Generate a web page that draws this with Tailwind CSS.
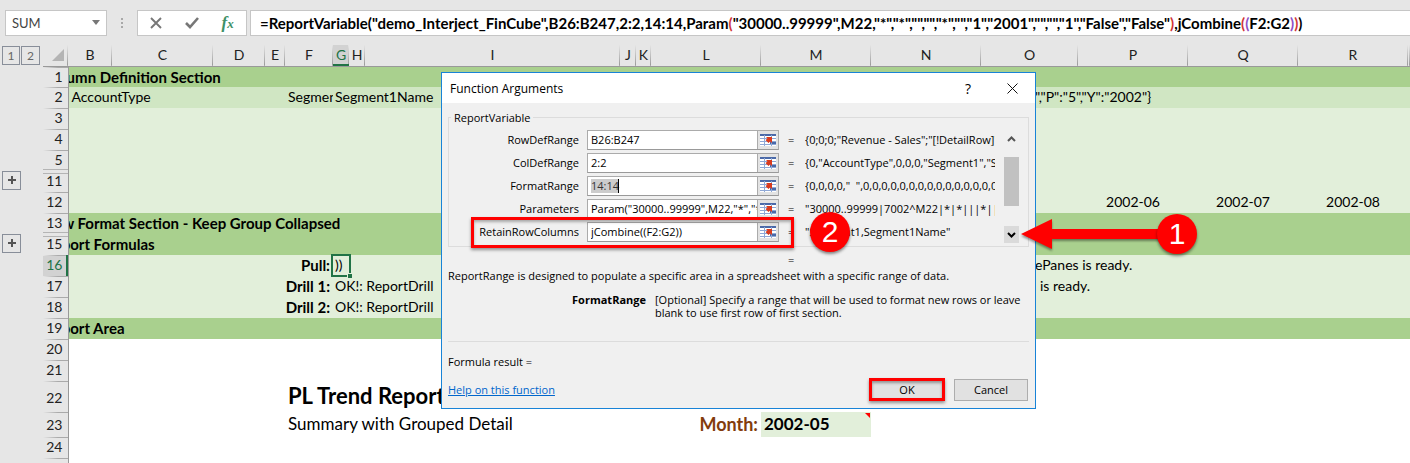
<!DOCTYPE html>
<html lang="en">
<head>
<meta charset="utf-8">
<title>Function Arguments</title>
<script src="https://cdn.jsdelivr.net/npm/@tailwindcss/browser@4"></script>
</head>
<body class="relative flex h-screen flex-col overflow-hidden bg-[#e6e6e6] font-['Lato',sans-serif] text-sm leading-[18px] text-black">

<!-- Formula bar -->
<div class="flex shrink-0 items-stretch pt-[10px] pb-[9px] pl-[5px]">
  <div class="relative flex h-[26px] w-[102px] border border-[#c6c6c6] bg-white">
    <input aria-label="Name box" value="SUM" class="w-full bg-transparent pl-[6px] text-[13px] text-[#444] outline-none">
    <svg class="absolute top-[9px] right-[6px] h-[5px] w-[8px]" viewBox="0 0 8 5"><path d="M0 0h8L4 5z" fill="#777"/></svg>
  </div>
  <svg class="mx-[14px] h-[26px] w-[2px]" viewBox="0 0 2 26"><path d="M0 8h2v2H0zM0 12h2v2H0zM0 16h2v2H0z" fill="#a8a8a8"/></svg>
  <div class="flex w-[110px] items-center justify-around border border-[#c6c6c6] bg-white px-[1px]">
    <button aria-label="Cancel entry"><svg class="h-[12px] w-[12px]" viewBox="0 0 12 12"><path d="M1 1l10 10M11 1L1 11" stroke="#777" stroke-width="1.9" fill="none"/></svg></button>
    <button aria-label="Enter"><svg class="h-[12px] w-[14px]" viewBox="0 0 14 12"><path d="M1 6l4 4 8-9" stroke="#777" stroke-width="2.6" fill="none"/></svg></button>
    <button aria-label="Insert function" class="font-['Liberation_Serif',serif] text-[17px] font-bold text-[#3f9168] italic">f<span class="text-[13px]">x</span></button>
  </div>
  <div class="ml-[3px] flex min-w-0 flex-1 items-center overflow-hidden border border-r-0 border-[#c6c6c6] bg-white pl-[9px] text-[15px] font-bold whitespace-nowrap">
    <span>=ReportVariable("demo_Interject_FinCube",B26:B247,2:2,14:14,Param<span class="text-[#d13438]">(</span>"30000..99999",M22,"*","*","","","*","","1","2001","","","1","False","False"<span class="text-[#d13438]">)</span>,jCombine<span class="text-[#d13438]">(</span><span class="text-[#8e4ec6]">(</span>F2:G2<span class="text-[#8e4ec6]">)</span><span class="text-[#d13438]">)</span>)</span>
  </div>
</div>

<!-- Worksheet -->
<table class="w-full table-fixed border-collapse bg-white whitespace-nowrap [&_td]:p-0 [&_th]:p-0 [&_tbody_th]:border-r [&_tbody_th]:border-[#999] [&_tbody_th]:bg-[#e6e6e6] [&_tbody_th]:bg-[linear-gradient(to_right,#e6e6e6,#aaa_60%)] [&_tbody_th]:bg-[length:100%_1px] [&_tbody_th]:bg-no-repeat [&_tbody_th]:pr-[5px] [&_tbody_th]:text-right [&_tbody_th]:text-sm [&_tbody_th]:font-normal [&_tbody_th]:text-[#222] [&_thead_th]:border-b [&_thead_th]:border-[#999] [&_thead_th]:bg-[linear-gradient(to_bottom,#e6e6e6,#999)] [&_thead_th]:bg-[length:1px_100%] [&_thead_th]:bg-right [&_thead_th]:bg-no-repeat [&_thead_th]:font-normal [&_thead_th]:text-[#222]">
  <colgroup>
    <col class="w-[43px]"><col class="w-[25px]"><col class="w-[44px]"><col class="w-[101px]"><col class="w-[52px]"><col class="w-[20px]"><col class="w-[48px]"><col class="w-[16px]"><col class="w-[16px]"><col class="w-[255px]"><col class="w-[16px]"><col class="w-[15px]"><col class="w-[110px]"><col class="w-[110px]"><col class="w-[110px]"><col class="w-[97px]"><col class="w-[110px]"><col class="w-[110px]"><col class="w-[110px]"><col>
  </colgroup>
  <thead class="bg-[#e6e6e6]">
    <tr class="h-[21px]">
      <td><div class="flex gap-px pl-[2px] text-[12px] leading-none text-[#666]"><button class="h-[19px] w-[18px] border border-[#888e99]">1</button><button class="h-[19px] w-[19px] border border-[#888e99]">2</button></div></td>
      <th aria-label="Select all"><svg class="ml-auto mr-[4px] h-[12px] w-[12px]" viewBox="0 0 12 12"><path d="M12 0v12H0z" fill="#b4b4b4"/></svg></th>
      <th>B</th><th>C</th><th>D</th><th>E</th><th>F</th><th class="bg-[#d2d2d2] !text-[#217346] shadow-[inset_0_-2px_0_#217346]">G</th><th>H</th><th>I</th><th>J</th><th>K</th><th>L</th><th>M</th><th>N</th><th>O</th><th>P</th><th>Q</th><th>R</th><th></th>
    </tr>
  </thead>
  <tbody>
    <tr class="h-[20px] bg-[#a9d08e]"><td class="bg-[#e6e6e6]"></td><th scope="row">1</th><td colspan="18" class="overflow-hidden text-[15px] font-bold"><div class="-ml-[24px]">Column Definition Section</div></td></tr>
    <tr class="h-[21px] bg-[#d0e6c3]"><td class="bg-[#e6e6e6]"></td><th scope="row">2</th><td colspan="4" class="!pl-[3px]">AccountType</td><td class="overflow-hidden !pl-[3px]">Segment1</td><td colspan="8" class="!pl-[2px]">Segment1Name</td><td colspan="5" class="!pl-[54px]">","P":"5","Y":"2002"}</td></tr>
    <tr class="h-[21px] bg-[#e2efda]"><td class="bg-[#e6e6e6]"></td><th scope="row">3</th><td colspan="18"></td></tr>
    <tr class="h-[21px] bg-[#e2efda]"><td class="bg-[#e6e6e6]"></td><th scope="row">4</th><td colspan="18"></td></tr>
    <tr class="h-[21px] bg-[#e2efda]"><td class="bg-[#e6e6e6]"></td><th scope="row">5</th><td colspan="18"></td></tr>
    <tr class="h-[21px] bg-[#e2efda]"><td class="bg-[#e6e6e6] align-top"><button aria-label="Expand group" class="ml-[2px] flex h-[19px] w-[19px] items-center justify-center border border-[#888e99]"><svg class="h-[8px] w-[8px]" viewBox="0 0 8 8"><path d="M4 0v8M0 4h8" stroke="#555" stroke-width="2"/></svg></button></td><th scope="row" class="relative"><span class="absolute inset-x-0 -top-[2px] h-[5px] border-y border-[#b4b4b4] bg-[#e6e6e6]"></span>11</th><td colspan="18"></td></tr>
    <tr class="h-[21px] bg-[#e2efda]"><td class="bg-[#e6e6e6]"></td><th scope="row">12</th><td colspan="14"></td><td class="text-center">2002-06</td><td class="text-center">2002-07</td><td class="text-center">2002-08</td><td></td></tr>
    <tr class="h-[21px] bg-[#a9d08e]"><td class="bg-[#e6e6e6]"></td><th scope="row">13</th><td colspan="18" class="overflow-hidden text-[15px] font-bold"><div class="-ml-[24px]">Row Format Section - Keep Group Collapsed</div></td></tr>
    <tr class="h-[21px] bg-[#a9d08e]"><td class="bg-[#e6e6e6] align-top"><button aria-label="Expand group" class="ml-[2px] flex h-[19px] w-[19px] items-center justify-center border border-[#888e99]"><svg class="h-[8px] w-[8px]" viewBox="0 0 8 8"><path d="M4 0v8M0 4h8" stroke="#555" stroke-width="2"/></svg></button></td><th scope="row" class="relative"><span class="absolute inset-x-0 -top-[2px] h-[5px] border-y border-[#b4b4b4] bg-[#e6e6e6]"></span>15</th><td colspan="18" class="overflow-hidden text-[15px] font-bold"><div class="-ml-[24px]">Report Formulas</div></td></tr>
    <tr class="h-[21px] bg-[#e2efda]"><td class="bg-[#e6e6e6]"></td><th scope="row" class="!bg-[#d2d2d2] !text-[#217346] shadow-[inset_-2px_0_0_#217346]">16</th><td colspan="5" class="!pr-[3px] text-right text-[15px] font-bold">Pull:</td><td class="relative !pl-[2px]">))<span class="absolute -inset-x-[2px] -inset-y-[1px] border-2 border-[#217346]"></span><span class="absolute -right-[3px] -bottom-[2px] h-[5px] w-[5px] border-t border-l border-[#e2efda] bg-[#217346]"></span></td><td colspan="7"></td><td colspan="5" class="!pl-[54px]">ePanes is ready.</td></tr>
    <tr class="h-[21px] bg-[#e2efda]"><td class="bg-[#e6e6e6]"></td><th scope="row">17</th><td colspan="5" class="!pr-[3px] text-right text-[15px] font-bold">Drill 1:</td><td colspan="8" class="!pl-[2px]">OK!: ReportDrill</td><td colspan="5" class="!pl-[59px]">is ready.</td></tr>
    <tr class="h-[21px] bg-[#e2efda]"><td class="bg-[#e6e6e6]"></td><th scope="row">18</th><td colspan="5" class="!pr-[3px] text-right text-[15px] font-bold">Drill 2:</td><td colspan="13" class="!pl-[2px]">OK!: ReportDrill</td></tr>
    <tr class="h-[21px] bg-[#a9d08e]"><td class="bg-[#e6e6e6]"></td><th scope="row">19</th><td colspan="18" class="overflow-hidden text-[15px] font-bold"><div class="-ml-[24px]">Report Area</div></td></tr>
    <tr class="h-[21px]"><td class="bg-[#e6e6e6]"></td><th scope="row">20</th><td colspan="18"></td></tr>
    <tr class="h-[21px]"><td class="bg-[#e6e6e6]"></td><th scope="row">21</th><td colspan="18"></td></tr>
    <tr class="h-[31px]"><td class="bg-[#e6e6e6]"></td><th scope="row" class="!pt-[4px]">22</th><td colspan="4"></td><td colspan="14" class="!pl-[3px] text-[22px] font-bold">PL Trend Report</td></tr>
    <tr class="h-[25px]"><td class="bg-[#e6e6e6]"></td><th scope="row" class="!pt-[2px]">23</th><td colspan="4"></td><td colspan="6" class="!pl-[3px] text-[17px]">Summary with Grouped Detail</td><td class="!pr-[3px] text-right text-[18px] font-bold text-[#833c0c]">Month:</td><td class="relative bg-[#e2efda] !pl-[3px] text-[17px] font-bold">2002-05<svg class="absolute top-px right-px h-[5px] w-[5px]" viewBox="0 0 5 5"><path d="M0 0h5v5z" fill="#f00"/></svg></td><td colspan="6"></td></tr>
    <tr class="h-[21px]"><td class="bg-[#e6e6e6]"></td><th scope="row">24</th><td colspan="18"></td></tr>
    <tr class="h-[21px]"><td class="bg-[#e6e6e6]"></td><th></th><td colspan="18"></td></tr>
  </tbody>
</table>

<!-- Function Arguments window -->
<section role="dialog" aria-labelledby="dlg" class="absolute top-[72px] left-[441px] w-[595px] border border-[#1883d7] bg-[#f0f0f0] font-['Open_Sans',sans-serif] text-[11px] leading-[13px]">
  <header class="flex h-[30px] items-center bg-white pr-[17px] pl-[8px]">
    <h1 id="dlg" class="flex-1 text-[12px]">Function Arguments</h1>
    <button aria-label="Help" class="mr-[36px] text-[14px]">?</button>
    <button aria-label="Close"><svg class="h-[11px] w-[11px]" viewBox="0 0 11 11"><path d="M.5.5l10 10M10.500.5l-10 10" stroke="#111" fill="none"/></svg></button>
  </header>
  <div class="px-[6px] pt-[8px]">
    <fieldset class="flex h-[136px] border border-[#dcdcdc] pr-[9px]">
      <legend class="ml-[2px] px-[3px]">ReportVariable</legend>
      <div class="grid flex-1 grid-cols-[138px_192px_26px_190px] content-start gap-y-[3px] pt-[6px] [&_label]:pr-[8px] [&_label]:text-right [&>*]:h-[20px] [&>*]:leading-[20px] [&>output]:overflow-hidden [&>output]:whitespace-nowrap [&>span]:pl-[9px] [&_input]:min-w-0 [&_input]:flex-1 [&_input]:bg-white [&_input]:pl-[3px] [&_input]:outline-none [&>div]:flex [&>div]:border [&>div]:border-[#ababab] [&>div]:border-b-[#999] [&_button]:w-[21px] [&_button]:border-l [&_button]:border-[#ababab] [&_button]:bg-[#e3e3e3]">
        <label for="a1">RowDefRange</label><div><input id="a1" value="B26:B247"><button aria-label="Pick range"><svg class="mx-auto h-[14px] w-[16px]" viewBox="0 0 16 14"><use href="#pick"/></svg></button></div><span>=</span><output>{0;0;0;"Revenue - Sales";"[!DetailRow]"</output>
        <label for="a2">ColDefRange</label><div><input id="a2" value="2:2"><button aria-label="Pick range"><svg class="mx-auto h-[14px] w-[16px]" viewBox="0 0 16 14"><use href="#pick"/></svg></button></div><span>=</span><output>{0,"AccountType",0,0,0,"Segment1","Segment1Name"</output>
        <label for="a3">FormatRange</label><div class="relative"><input id="a3" value="14:14"><span class="absolute top-[2px] left-[3px] h-[14px] w-[28px] border-r border-black bg-[#808080]/40"></span><button aria-label="Pick range"><svg class="mx-auto h-[14px] w-[16px]" viewBox="0 0 16 14"><use href="#pick"/></svg></button></div><span>=</span><output>{0,0,0,0,"&nbsp; ",0,0,0,0,0,0,0,0,0,0,0,0,0,0,0,0,0</output>
        <label for="a4">Parameters</label><div><input id="a4" value='Param("30000..99999",M22,"*","*'><button aria-label="Pick range"><svg class="mx-auto h-[14px] w-[16px]" viewBox="0 0 16 14"><use href="#pick"/></svg></button></div><span>=</span><output>"30000..99999|7002^M22|*|*|||*||1|2001</output>
        <label for="a5">RetainRowColumns</label><div><input id="a5" value="jCombine((F2:G2))"><button aria-label="Pick range"><svg class="mx-auto h-[14px] w-[16px]" viewBox="0 0 16 14"><use href="#pick"/></svg></button></div><span>=</span><output>"Segment1,Segment1Name"</output>
      </div>
      <div class="flex h-[119px] w-[15px] flex-col pt-[6px]">
        <button aria-label="Scroll up" class="flex h-[17px] items-center justify-center"><svg class="h-[6px] w-[9px]" viewBox="0 0 9 6"><path d="M1 5l3.500-3.500L8 5" stroke="#555" stroke-width="2" fill="none"/></svg></button>
        <div class="mt-[10px] h-[49px] bg-[#c1c1c1]"></div>
        <button aria-label="Scroll down" class="mt-auto flex h-[17px] items-center justify-center bg-[#dadada]"><svg class="h-[6px] w-[9px]" viewBox="0 0 9 6"><path d="M1 1l3.500 3.500L8 1" stroke="#000" stroke-width="2" fill="none"/></svg></button>
      </div>
    </fieldset>
    <p class="mt-[6px] pl-[340px]">=</p>
    <p class="mt-[3px]">ReportRange is designed to populate a specific area in a spreadsheet with a specific range of data.</p>
    <div class="mt-[11px] grid h-[49px] grid-cols-[198px_1fr] gap-x-[9px] border-b border-[#dcdcdc]">
      <b class="text-right">FormatRange</b>
      <p>[Optional] Specify a range that will be used to format new rows or leave<br>blank to use first row of first section.</p>
    </div>
    <p class="mt-[13px]">Formula result =</p>
    <div class="mt-[10px] mb-[7px] flex items-center gap-[9px] pr-px">
      <a href="#" class="mr-auto text-[#0066cc] underline">Help on this function</a>
      <button class="h-[23px] w-[76px] border-3 border-[#f00] bg-[#e1e1e1] shadow-[0_2px_3px_rgba(0,0,0,0.4),inset_0_2px_3px_rgba(0,0,0,0.35)]">OK</button>
      <button class="h-[22px] w-[74px] border border-[#adadad] bg-[#e1e1e1]">Cancel</button>
    </div>
  </div>
</section>

<!-- Callouts -->
<div class="pointer-events-none absolute top-[217px] left-[471px] h-[31px] w-[323px] border-3 border-[#f00] shadow-[0_2px_3px_rgba(0,0,0,0.4),inset_0_2px_3px_rgba(0,0,0,0.3)]"></div>
<svg class="pointer-events-none absolute top-[216px] left-[1021px] h-[36px] w-[150px] drop-shadow-[0_2px_1px_rgba(0,0,0,0.4)]" viewBox="0 0 150 36"><path d="M0 18L31 3v10h115v10H31v10z" fill="#f00"/></svg>
<div class="pointer-events-none absolute top-[212px] left-[810px] flex h-[40px] w-[40px] items-center justify-center rounded-full bg-[#f00] font-['Liberation_Sans',sans-serif] text-[30px] text-white shadow-[0_2px_3px_rgba(0,0,0,0.45)]">2</div>
<div class="pointer-events-none absolute top-[214px] left-[1157px] flex h-[40px] w-[40px] items-center justify-center rounded-full bg-[#f00] font-['Liberation_Sans',sans-serif] text-[30px] text-white shadow-[0_2px_3px_rgba(0,0,0,0.45)]">1</div>

<svg class="hidden">
  <symbol id="pick" viewBox="0 0 16 14">
    <path d="M0 1h16v12H0z" fill="#fff"/>
    <path d="M0 1h16v2H0zM10 9h6v3h-6z" fill="#4a69a8"/>
    <path d="M0 5.500h16M0 8.500h16M0 11.500h16M4.500 2v11M11.500 2v11" stroke="#8fa8d6" fill="none"/>
    <path d="M6 4h6v6l-2-1.500L8.500 10 5.500 7 7.500 5.500z" fill="#d9391c"/>
  </symbol>
</svg>
</body>
</html>
